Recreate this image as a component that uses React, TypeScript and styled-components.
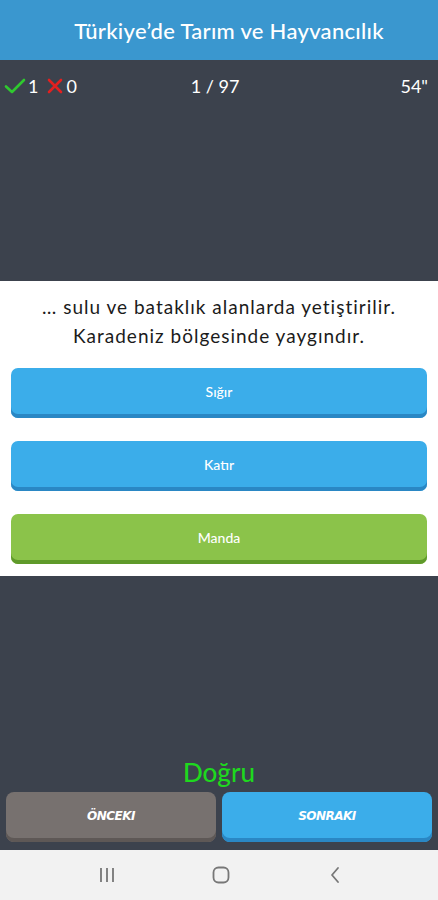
import React from "react";
import styled, { createGlobalStyle } from "styled-components";

const Global = createGlobalStyle`
  html, body { margin: 0; padding: 0; background: #3c424d; }
  body { font-family: "Lato", "Noto Sans", sans-serif; }
  * { box-sizing: border-box; }
`;

const Screen = styled.div`
  width: 438px;
  height: 900px;
  display: flex;
  flex-direction: column;
  background: #3c424d;
  overflow: hidden;
`;

const Header = styled.header`
  height: 60px;
  flex: none;
  background: #3a97cf;
  display: flex;
  align-items: center;
  justify-content: center;
  color: #fff;
  font-size: 22px;
  font-weight: 500;
  letter-spacing: 0.3px;
  padding-left: 20px;
`;

const Stats = styled.div`
  height: 52px;
  flex: none;
  display: grid;
  grid-template-columns: 1fr auto 1fr;
  align-items: center;
  padding: 0 10px 0 4px;
  color: #fff;
  font-size: 18px;
`;

const Score = styled.div`
  display: flex;
  align-items: center;
  gap: 2px;
`;

const Counter = styled.div`
  text-align: center;
  padding-right: 2px;
`;

const Timer = styled.div`
  text-align: right;
`;

const Spacer = styled.div<{ $h: number }>`
  height: ${(p) => p.$h}px;
  flex: none;
`;

const Panel = styled.section`
  flex: none;
  background: #fff;
  padding: 11px 11px 12px;
  display: flex;
  flex-direction: column;
`;

const Question = styled.p`
  margin: 0 0 18px;
  text-align: center;
  color: #1b1b1b;
  font-size: 19px;
  letter-spacing: 1px;
  line-height: 29px;
`;

const Options = styled.div`
  display: flex;
  flex-direction: column;
  gap: 23px;
`;

const Option = styled.div<{ $color: string; $edge: string }>`
  height: 50px;
  border-radius: 7px;
  background: ${(p) => p.$color};
  box-shadow: inset 0 -4px 0 ${(p) => p.$edge};
  display: flex;
  align-items: center;
  justify-content: center;
  color: #fff;
  font-size: 14px;
  font-weight: 500;
  padding-bottom: 3px;
`;

const Result = styled.div`
  flex: 1;
  display: flex;
  align-items: flex-end;
  justify-content: center;
  color: #1ed81e;
  font-size: 26px;
  font-weight: 500;
  padding-bottom: 4px;
`;

const NavRow = styled.div`
  flex: none;
  display: grid;
  grid-template-columns: 1fr 1fr;
  gap: 6px;
  padding: 0 6px 8px;
`;

const NavButton = styled.div<{ $color: string; $edge: string }>`
  height: 50px;
  border-radius: 8px;
  background: ${(p) => p.$color};
  box-shadow: inset 0 -4px 0 ${(p) => p.$edge};
  display: flex;
  align-items: center;
  justify-content: center;
  color: #fff;
  font-family: "DejaVu Sans", sans-serif;
  font-size: 12px;
  font-weight: 900;
  font-style: italic;
  letter-spacing: -0.5px;
  padding-bottom: 3px;
`;

const SystemBar = styled.nav`
  height: 50px;
  flex: none;
  background: #f2f2f2;
  display: flex;
  align-items: center;
  justify-content: center;
  gap: 94px;
  padding-left: 4px;
`;

const Check = () => (
  <svg width="22" height="16" viewBox="0 0 22 16">
    <path d="M2 8.5 L8 14 L20 2" fill="none" stroke="#2fc92f" strokeWidth="2.6" strokeLinecap="round" strokeLinejoin="round" />
  </svg>
);

const Cross = () => (
  <svg width="18" height="16" viewBox="0 0 18 16" style={{ marginLeft: 6 }}>
    <path d="M3 2 L15 14 M15 2 L3 14" stroke="#e32020" strokeWidth="2.6" strokeLinecap="round" />
  </svg>
);

export default function App() {
  return (
    <>
      <Global />
      <Screen>
        <Header>Türkiye’de Tarım ve Hayvancılık</Header>
        <Stats>
          <Score>
            <Check />
            <span>1</span>
            <Cross />
            <span>0</span>
          </Score>
          <Counter>1 / 97</Counter>
          <Timer>54"</Timer>
        </Stats>
        <Spacer $h={169} />
        <Panel>
          <Question>
            … sulu ve bataklık alanlarda yetiştirilir.
            <br />
            Karadeniz bölgesinde yaygındır.
          </Question>
          <Options>
            <Option $color="#3badea" $edge="#2a87c4">Sığır</Option>
            <Option $color="#3badea" $edge="#2a87c4">Katır</Option>
            <Option $color="#8bc34a" $edge="#5f9a2a">Manda</Option>
          </Options>
        </Panel>
        <Result>Doğru</Result>
        <NavRow>
          <NavButton $color="#77716f" $edge="#5e5856">ÖNCEKI</NavButton>
          <NavButton $color="#3badea" $edge="#2a87c4">SONRAKI</NavButton>
        </NavRow>
        <SystemBar>
          <svg width="20" height="18" viewBox="0 0 20 18">
            <path d="M4 2v14M10 2v14M16 2v14" stroke="#777" strokeWidth="1.8" />
          </svg>
          <svg width="20" height="20" viewBox="0 0 20 20">
            <rect x="2.5" y="2.5" width="15" height="15" rx="5" fill="none" stroke="#777" strokeWidth="1.8" />
          </svg>
          <svg width="20" height="18" viewBox="0 0 20 18">
            <path d="M13 2 L7 9 L13 16" fill="none" stroke="#777" strokeWidth="1.8" strokeLinecap="round" strokeLinejoin="round" />
          </svg>
        </SystemBar>
      </Screen>
    </>
  );
}
